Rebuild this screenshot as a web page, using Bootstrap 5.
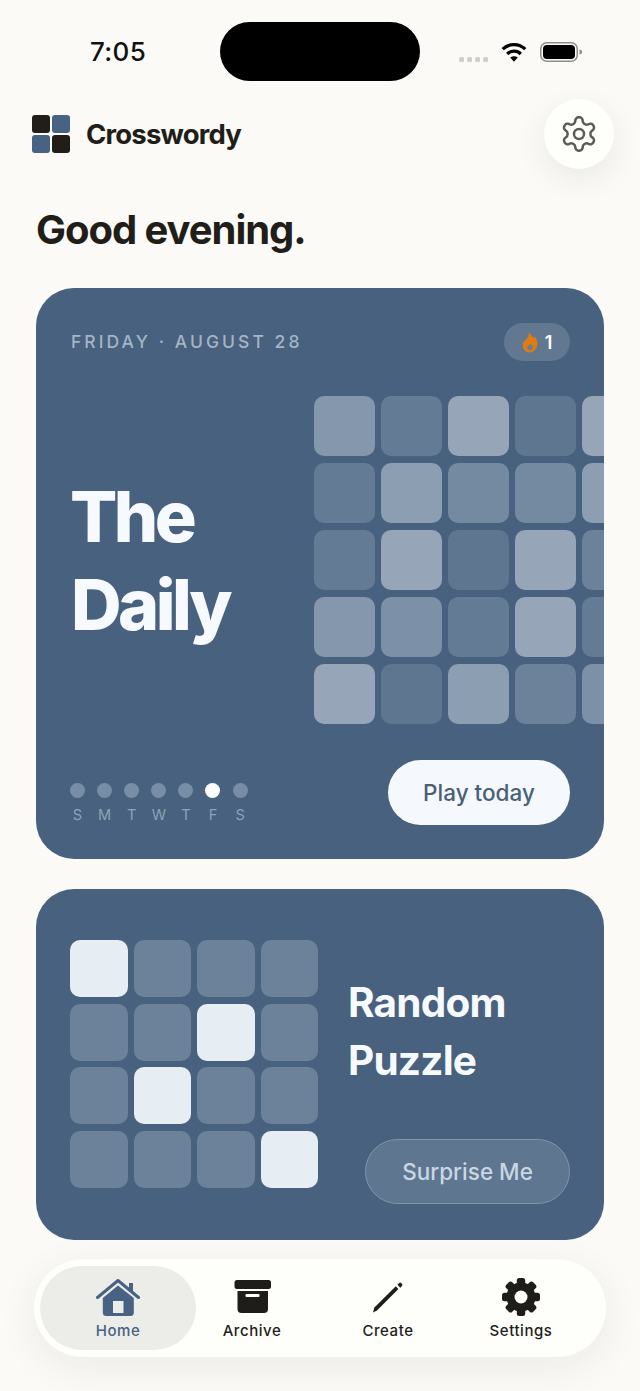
<!doctype html>
<html lang="en">
<head>
<meta charset="utf-8">
<title>Crosswordy</title>
<link href="https://cdn.jsdelivr.net/npm/bootstrap@5.3.0/dist/css/bootstrap.min.css" rel="stylesheet">
<style>
body{background:#fbfaf6;color:#211e1a;font-family:Inter,"Liberation Sans",sans-serif;width:640px;height:1391px;overflow:hidden}
.status-row{height:99px;padding-top:22px}
.time-slot{width:220px;height:59px;padding-left:90px;font-size:26px;font-weight:500;letter-spacing:.35px;line-height:60px;color:#111}
.island{width:200px;height:59px;background:#000;border-radius:30px}
.status-icons{width:220px;height:59px;padding:20px 0 0 39px;gap:13px}
.signal-dots{gap:3px;margin-top:15px}
.signal-dots i{display:block;width:5px;height:5px;border-radius:1.500px;background:#cfcfcc}
.head-row{height:70px;padding:0 26px 0 32px}
.logo-grid{display:grid;grid-template-columns:18px 18px;gap:2px}
.logo-grid i{display:block;height:18px;border-radius:3px;background:#211e1a}
.logo-grid i.blue{background:#476282}
.brand-name{font-size:27.5px;font-weight:700;letter-spacing:-.8px;margin-left:16px;line-height:38px}
.gear-btn{width:70px;height:70px;background:#fefefb;box-shadow:0 10px 30px rgba(40,35,25,.08);border:0;padding:0}
.greeting{font-size:40px;font-weight:700;letter-spacing:-1.05px;line-height:48px;margin:37px 0 0 36px;height:82px}
.tile-card{width:568px;margin-left:36px;background:#47617e;border-radius:38px;overflow:hidden}
.daily-card{height:571px;padding:35px 34px 34px 35px}
.date-text{font-size:17.5px;font-weight:500;letter-spacing:3.05px;color:#a6b4c5}
.streak{height:38px;width:66px;background:rgba(255,255,255,.15);gap:7px;color:#fff;font-size:18px;font-weight:600}
.hero-row{margin-top:35px;height:328px}
.hero-title{flex:0 0 243px;font-size:70px;font-weight:800;letter-spacing:-3.500px;line-height:88px;color:#f6f9fd;padding-top:1px;text-indent:-1px}
.big-grid{flex:none;display:grid;grid-template-columns:repeat(5,61px);grid-auto-rows:60.4px;gap:6.6px 6px}
.big-grid i,.small-grid i{display:block;border-radius:10px}
.t1{background:#5f7690}.t2{background:#637b94}.t3{background:#6b829a}.t4{background:#738aa1}.t5{background:#7c91a7}.t6{background:#8497ad}.t7{background:#8c9fb2}.t8{background:#96a6b8}
.foot-row{margin-top:36px}
.week{display:grid;grid-template-columns:repeat(7,15px);column-gap:12.1px;margin:0 0 2px -1px}
.day{display:flex;flex-direction:column;align-items:center;color:#8fa2b8;font-size:14.500px;line-height:17px;width:15px}
.day b{display:block;width:15px;height:15px;border-radius:50%;background:#788ea6;margin-bottom:8px}
.day.on b{background:#fbfdff}
.btn.play-btn{width:182px;height:65px;background:#f5f9fd;color:#4a6078;font-size:22.5px;font-weight:500;border:0;padding:0;line-height:65px}
.random-card{height:351px;margin-top:30px;padding:51px 34px 36px 34px}
.small-grid{flex:none;display:grid;grid-template-columns:repeat(4,57.5px);grid-auto-rows:57.3px;gap:6.3px 6px;width:248px}
.small-grid i{background:#6c829b}
.small-grid i.lit{background:#e6edf3}
.random-title{font-size:40.5px;font-weight:700;letter-spacing:-.8px;line-height:58px;color:#f6f9fd;margin:34px 0 0 30px}
.btn.surprise-btn{width:205px;height:65px;margin-top:49px;background:#5f7690;border:1.5px solid #8195ac;color:#c9d6e4;font-size:22.5px;font-weight:500;padding:0;line-height:62px}
.tabbar{width:572px;height:98px;margin:19px 0 0 34px;background:#fefefb;border-radius:49px;padding:7px 26px 7px 6px;box-shadow:0 10px 40px rgba(40,35,25,.07)}
.tab-item{flex:none;height:84px;color:#1f1d1a;font-size:15px;font-weight:500;letter-spacing:.55px;line-height:18px;padding-top:12px;text-decoration:none}
.tab-item svg{display:block;height:38px;margin-bottom:6px}
.w-home{width:156px;background:#ecece9;border-radius:42px;color:#476282}
.w-arch{width:112px}.w-make{width:160px}.w-set{width:106px}
</style>
</head>
<body>
<div class="status-row d-flex">
  <div class="time-slot">7:05</div>
  <div class="island"></div>
  <div class="status-icons d-flex align-items-start">
    <div class="signal-dots d-flex"><i></i><i></i><i></i><i></i></div>
    <svg width="26" height="20" viewBox="0 0 26 20" aria-hidden="true"><path d="M1.7 7.2A16 16 0 0 1 24.3 7.2M6.2 12A9.6 9.6 0 0 1 19.8 12" fill="none" stroke="#000" stroke-width="3.2"/><path d="M9.2 15.6L13 19.8L16.8 15.6Q13 12.8 9.2 15.6Z" fill="#000"/></svg>
    <svg width="42" height="20" viewBox="0 0 42 20" aria-hidden="true"><rect x=".75" y=".75" width="36.5" height="18.5" rx="6" fill="none" stroke="#8d8d8a" stroke-width="1.5"/><rect x="3" y="3" width="32" height="14" rx="4" fill="#000"/><path d="M39.5 7.5a2.5 2.5 0 0 1 0 5z" fill="#8d8d8a"/></svg>
  </div>
</div>

<header class="head-row d-flex align-items-center justify-content-between">
  <div class="d-flex align-items-center">
    <div class="logo-grid"><i></i><i class="blue"></i><i class="blue"></i><i></i></div>
    <span class="brand-name">Crosswordy</span>
  </div>
  <button class="gear-btn rounded-circle d-flex align-items-center justify-content-center" type="button" aria-label="Settings">
    <svg width="40" height="40" viewBox="0 0 24 24" fill="none" stroke="#5d5b57" stroke-width="1.5" stroke-linecap="round" stroke-linejoin="round" aria-hidden="true"><path d="M12.22 2h-.44a2 2 0 0 0-2 2v.18a2 2 0 0 1-1 1.73l-.43.25a2 2 0 0 1-2 0l-.15-.08a2 2 0 0 0-2.73.73l-.22.38a2 2 0 0 0 .73 2.73l.15.1a2 2 0 0 1 1 1.72v.51a2 2 0 0 1-1 1.74l-.15.09a2 2 0 0 0-.73 2.73l.22.38a2 2 0 0 0 2.73.73l.15-.08a2 2 0 0 1 2 0l.43.25a2 2 0 0 1 1 1.73V20a2 2 0 0 0 2 2h.44a2 2 0 0 0 2-2v-.18a2 2 0 0 1 1-1.73l.43-.25a2 2 0 0 1 2 0l.15.08a2 2 0 0 0 2.73-.73l.22-.39a2 2 0 0 0-.73-2.73l-.15-.08a2 2 0 0 1-1-1.74v-.5a2 2 0 0 1 1-1.74l.15-.09a2 2 0 0 0 .73-2.73l-.22-.38a2 2 0 0 0-2.73-.73l-.15.08a2 2 0 0 1-2 0l-.43-.25a2 2 0 0 1-1-1.73V4a2 2 0 0 0-2-2z"/><circle cx="12" cy="12" r="3"/></svg>
  </button>
</header>

<h1 class="greeting">Good evening.</h1>

<section class="tile-card daily-card">
  <div class="d-flex align-items-center justify-content-between">
    <span class="date-text">FRIDAY · AUGUST 28</span>
    <span class="streak rounded-pill d-flex align-items-center justify-content-center">
      <svg width="16" height="21" viewBox="0 0 16 21" aria-hidden="true"><path d="M6.500 .5C8.600 1.400 9.600 3.800 11.300 6.100C11.900 5.600 12.100 5 12.200 4.400C14.600 6.400 15.500 9 15.300 12.100C15 17 12 20.500 8 20.500C3.600 20.500 .8 17.300 .8 13.300C.8 9.600 3.300 8.600 5.300 6.300C6.400 5 7 2.900 6.500 .5Z" fill="#df7b10"/><path d="M8.200 11.500C9.200 12.800 10.800 13.400 10.800 15.500C10.800 17.200 9.700 18.200 8.100 18.200C6.500 18.200 5.400 17.200 5.400 15.700C5.400 13.900 7.200 13.300 8.200 11.500Z" fill="#6a7f96"/></svg>
      <span>1</span>
    </span>
  </div>
  <div class="hero-row d-flex align-items-center">
    <h2 class="hero-title m-0">The<br>Daily</h2>
    <div class="big-grid align-self-start">
      <i class="t6"></i><i class="t2"></i><i class="t8"></i><i class="t1"></i><i class="t8"></i>
      <i class="t2"></i><i class="t7"></i><i class="t4"></i><i class="t4"></i><i class="t7"></i>
      <i class="t2"></i><i class="t8"></i><i class="t1"></i><i class="t8"></i><i class="t3"></i>
      <i class="t6"></i><i class="t5"></i><i class="t2"></i><i class="t8"></i><i class="t2"></i>
      <i class="t8"></i><i class="t1"></i><i class="t7"></i><i class="t3"></i><i class="t5"></i>
    </div>
  </div>
  <div class="foot-row d-flex align-items-end justify-content-between">
    <div class="week">
      <span class="day"><b></b>S</span><span class="day"><b></b>M</span><span class="day"><b></b>T</span><span class="day"><b></b>W</span><span class="day"><b></b>T</span><span class="day on"><b></b>F</span><span class="day"><b></b>S</span>
    </div>
    <button class="btn play-btn rounded-pill" type="button">Play today</button>
  </div>
</section>

<section class="tile-card random-card d-flex">
  <div class="small-grid">
    <i class="lit"></i><i></i><i></i><i></i>
    <i></i><i></i><i class="lit"></i><i></i>
    <i></i><i class="lit"></i><i></i><i></i>
    <i></i><i></i><i></i><i class="lit"></i>
  </div>
  <div class="flex-grow-1 d-flex flex-column">
    <h2 class="random-title">Random<br>Puzzle</h2>
    <button class="btn surprise-btn rounded-pill align-self-end" type="button">Surprise Me</button>
  </div>
</section>

<nav class="tabbar d-flex" aria-label="Main">
  <a class="tab-item w-home d-flex flex-column align-items-center" href="#">
    <svg width="44" height="38" viewBox="0 0 44 38" aria-hidden="true"><path d="M1.500 19.500L22 2.500L42.500 19.500" fill="none" stroke="#476282" stroke-width="3" stroke-linecap="round" stroke-linejoin="round"/><rect x="33" y="5" width="4" height="9" fill="#476282"/><path d="M6.800 20L22 7.500L37.800 20V34.500A3.500 3.500 0 0 1 34.300 38H10.300A3.500 3.500 0 0 1 6.800 34.500Z" fill="#476282"/><rect x="17" y="23" width="10.500" height="12" fill="#ecece9"/></svg>
    <span>Home</span>
  </a>
  <a class="tab-item w-arch d-flex flex-column align-items-center" href="#">
    <svg width="38" height="38" viewBox="-1 0 38 38" aria-hidden="true"><rect x=".5" y="2" width="36.500" height="9" rx="2.500" fill="#1f1d1a"/><path d="M3.500 13H34V31A4 4 0 0 1 30 35H7.500A4 4 0 0 1 3.500 31Z" fill="#1f1d1a"/><rect x="11.500" y="16" width="14" height="3" rx="1" fill="#fefefb"/></svg>
    <span>Archive</span>
  </a>
  <a class="tab-item w-make d-flex flex-column align-items-center" href="#">
    <svg width="32" height="38" viewBox="0 0 32 38" aria-hidden="true"><path d="M1 34.500L2.400 29.500L23.800 8.300L26.400 10.900L5 32.600Z" fill="#1f1d1a"/><path d="M25.400 6.800L27 5.200A1.700 1.700 0 0 1 29.400 5.200L29.900 5.700A1.700 1.700 0 0 1 29.900 8.100L28.300 9.700Z" fill="#1f1d1a"/></svg>
    <span>Create</span>
  </a>
  <a class="tab-item w-set d-flex flex-column align-items-center" href="#">
    <svg width="38" height="38" viewBox="-19 -19 38 38" aria-hidden="true"><g fill="#1f1d1a"><circle r="14.500"/><rect x="-4.200" y="-19" width="8.400" height="38" rx="2.500"/><rect x="-4.200" y="-19" width="8.400" height="38" rx="2.500" transform="rotate(45)"/><rect x="-4.200" y="-19" width="8.400" height="38" rx="2.500" transform="rotate(90)"/><rect x="-4.200" y="-19" width="8.400" height="38" rx="2.500" transform="rotate(135)"/></g><circle r="6.500" fill="#fefefb"/></svg>
    <span>Settings</span>
  </a>
</nav>
<script src="https://cdn.jsdelivr.net/npm/bootstrap@5.3.0/dist/js/bootstrap.bundle.min.js"></script>
</body>
</html>
